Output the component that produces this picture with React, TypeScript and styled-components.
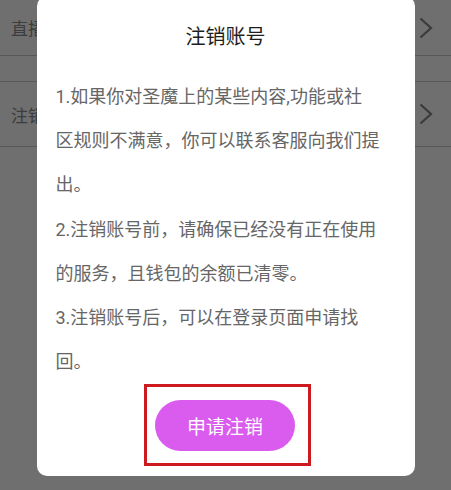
import React from "react";
import styled, { createGlobalStyle } from "styled-components";

const GlobalStyle = createGlobalStyle`
  html, body {
    margin: 0;
    padding: 0;
    background: #ffffff;
  }

  body {
    font-family: Roboto, "Noto Sans CJK SC", sans-serif;
  }
`;

const Page = styled.div`
  display: flex;
  flex-direction: column;
  height: 490px;
  background: #ffffff;
`;

const Row = styled.div<{ $height: number; $top?: boolean }>`
  display: flex;
  align-items: center;
  justify-content: space-between;
  height: ${(p) => p.$height}px;
  padding: 0 18px 0 11px;
  border-bottom: 1px solid #cacaca;
  border-top: ${(p) => (p.$top ? "1px solid #cacaca" : "none")};
  font-size: 17px;
  color: #8a8a8a;
`;

const Spacer = styled.div`
  height: 25px;
`;

const Overlay = styled.div`
  position: fixed;
  inset: 0;
  display: flex;
  justify-content: center;
  align-items: flex-start;
  background: rgba(0, 0, 0, 0.565);
`;

const Dialog = styled.div`
  display: flex;
  flex-direction: column;
  align-items: center;
  width: 378px;
  margin-top: -4px;
  padding: 27px 0 10px;
  box-sizing: border-box;
  background: #ffffff;
  border-radius: 10px;
`;

const Title = styled.div`
  font-size: 20px;
  line-height: 28px;
  color: #1e1e1e;
`;

const Content = styled.div`
  align-self: stretch;
  margin-top: 24px;
  padding: 0 19px;
`;

const Paragraph = styled.p`
  margin: 0;
  font-size: 18px;
  line-height: 44.17px;
  color: #666666;
  white-space: nowrap;
`;

const Highlight = styled.div`
  display: flex;
  margin-left: 4px;
  padding: 13px 13px 12px 8px;
  border: 3px solid #cc1a1f;
`;

const Button = styled.button`
  width: 140px;
  height: 51px;
  border: none;
  border-radius: 26px;
  background: #da5cee;
  color: #ffffff;
  font-family: Roboto, "Noto Sans CJK SC", sans-serif;
  font-size: 19px;
  cursor: pointer;
`;

function Chevron() {
  return (
    <svg width="14" height="22" viewBox="0 0 14 22">
      <polyline
        points="1.5,1.5 12,11 1.5,20.5"
        fill="none"
        stroke="#858585"
        strokeWidth="2.2"
      />
    </svg>
  );
}

export default function App() {
  return (
    <>
      <GlobalStyle />
      <Page>
        <Row $height={55}>
          <span>直播设置</span>
          <Chevron />
        </Row>
        <Spacer />
        <Row $height={64} $top>
          <span>注销账号</span>
          <Chevron />
        </Row>
      </Page>
      <Overlay>
        <Dialog>
          <Title>注销账号</Title>
          <Content>
            <Paragraph>
              1.如果你对圣魔上的某些内容,功能或社
              <br />
              区规则不满意，你可以联系客服向我们提
              <br />
              出。
            </Paragraph>
            <Paragraph>
              2.注销账号前，请确保已经没有正在使用
              <br />
              的服务，且钱包的余额已清零。
            </Paragraph>
            <Paragraph>
              3.注销账号后，可以在登录页面申请找
              <br />
              回。
            </Paragraph>
          </Content>
          <Highlight>
            <Button>申请注销</Button>
          </Highlight>
        </Dialog>
      </Overlay>
    </>
  );
}
